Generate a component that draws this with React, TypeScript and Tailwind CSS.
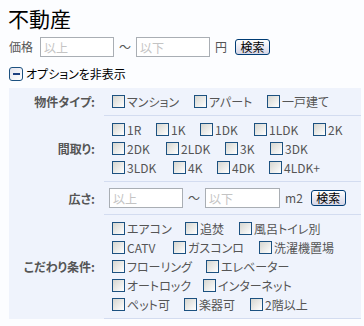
import React from "react";

const font = {
  fontFamily: '"Noto Sans CJK JP", "Noto Sans", sans-serif',
};

interface ICheckProps {
  label: string;
  w?: string;
}

function Check({ label, w = "" }: ICheckProps) {
  return (
    <label className={`flex items-center shrink-0 ${w}`}>
      <span className="ml-[3px] mr-[2px] inline-block size-[13px] shrink-0 border border-[#1c5180] bg-linear-to-br from-[#d6d6d0] to-white" />
      <span className="whitespace-nowrap">{label}</span>
    </label>
  );
}

function Line({ items }: { items: [string, string][] }) {
  return (
    <div className="flex h-[19px] items-center">
      {items.map(([label, w]) => (
        <Check key={label} label={label} w={w} />
      ))}
    </div>
  );
}

function SearchButton() {
  return (
    <button className="flex h-[16px] w-[35px] items-center justify-center rounded-[3px] border border-[#003c74] bg-linear-to-b from-white to-[#d6d6e6] text-[12px] leading-none text-black">
      検索
    </button>
  );
}

function TextBox({ placeholder, w = "w-[74px]" }: { placeholder: string; w?: string }) {
  return (
    <input
      type="text"
      placeholder={placeholder}
      className={`h-[20px] ${w} border border-[#a9aeb4] bg-white px-[3px] text-[12px] text-[#555] outline-none placeholder:text-[#c4c4c4]`}
    />
  );
}

export default function App() {
  return (
    <div
      className="min-h-[326px] w-[364px] bg-[#fcfdff] pl-[9px] text-[12px] text-[#555] [font-feature-settings:'palt']"
      style={font}
    >
      <div className="h-[34px] pt-[5px] pl-[-1px] text-[21px] leading-[26px] text-black -ml-[1px]">
        不動産
      </div>

      <div className="mt-[3px] flex h-[20px] items-center">
        <span>価格</span>
        <span className="ml-[7px]">
          <TextBox placeholder="以上" />
        </span>
        <span className="mx-[5px]">～</span>
        <TextBox placeholder="以下" />
        <span className="ml-[5px]">円</span>
        <span className="ml-[8px]">
          <SearchButton />
        </span>
      </div>

      <div className="mt-[9px] flex h-[15px] items-center">
        <span className="flex size-[14px] items-center justify-center rounded-[3px] border border-[#1c5180] bg-linear-to-br from-[#e4e4ee] to-white">
          <span className="h-[2px] w-[7px] bg-[#1c3f80]" />
        </span>
        <span className="ml-[3px] text-black">オプションを非表示</span>
      </div>

      <div className="mt-[7px] grid w-[352px] grid-cols-[95px_1fr] bg-[#eff3fc]">
        <div className="flex items-center justify-end pr-[9px] font-bold">物件タイプ:</div>
        <div className="border-b border-[#d3dcf0] py-[4px] pl-[5px]">
          <Line
            items={[
              ["マンション", "w-[82px]"],
              ["アパート", "w-[73px]"],
              ["一戸建て", ""],
            ]}
          />
        </div>

        <div className="flex items-center justify-end pr-[9px] font-bold">間取り:</div>
        <div className="border-b border-[#d3dcf0] py-[4px] pl-[5px]">
          <Line
            items={[
              ["1R", "w-[44px]"],
              ["1K", "w-[44px]"],
              ["1DK", "w-[54px]"],
              ["1LDK", "w-[59px]"],
              ["2K", ""],
            ]}
          />
          <Line
            items={[
              ["2DK", "w-[54px]"],
              ["2LDK", "w-[59px]"],
              ["3K", "w-[45px]"],
              ["3DK", ""],
            ]}
          />
          <Line
            items={[
              ["3LDK", "w-[61px]"],
              ["4K", "w-[44px]"],
              ["4DK", "w-[52px]"],
              ["4LDK+", ""],
            ]}
          />
        </div>

        <div className="flex items-center justify-end pr-[9px] font-bold">広さ:</div>
        <div className="flex items-center border-b border-[#d3dcf0] py-[6px] pl-[5px]">
          <TextBox placeholder="以上" />
          <span className="mx-[5px]">～</span>
          <TextBox placeholder="以下" w="w-[75px]" />
          <span className="ml-[5px]">m2</span>
          <span className="ml-[8px]">
            <SearchButton />
          </span>
        </div>

        <div className="flex items-center justify-end pr-[9px] font-bold">こだわり条件:</div>
        <div className="border-b border-[#d3dcf0] py-[4px] pl-[5px]">
          <Line
            items={[
              ["エアコン", "w-[73px]"],
              ["追焚", "w-[54px]"],
              ["風呂トイレ別", ""],
            ]}
          />
          <Line
            items={[
              ["CATV", "w-[61px]"],
              ["ガスコンロ", "w-[86px]"],
              ["洗濯機置場", ""],
            ]}
          />
          <Line
            items={[
              ["フローリング", "w-[94px]"],
              ["エレベーター", ""],
            ]}
          />
          <Line
            items={[
              ["オートロック", "w-[91px]"],
              ["インターネット", ""],
            ]}
          />
          <Line
            items={[
              ["ペット可", "w-[72px]"],
              ["楽器可", "w-[66px]"],
              ["2階以上", ""],
            ]}
          />
        </div>
      </div>
    </div>
  );
}
